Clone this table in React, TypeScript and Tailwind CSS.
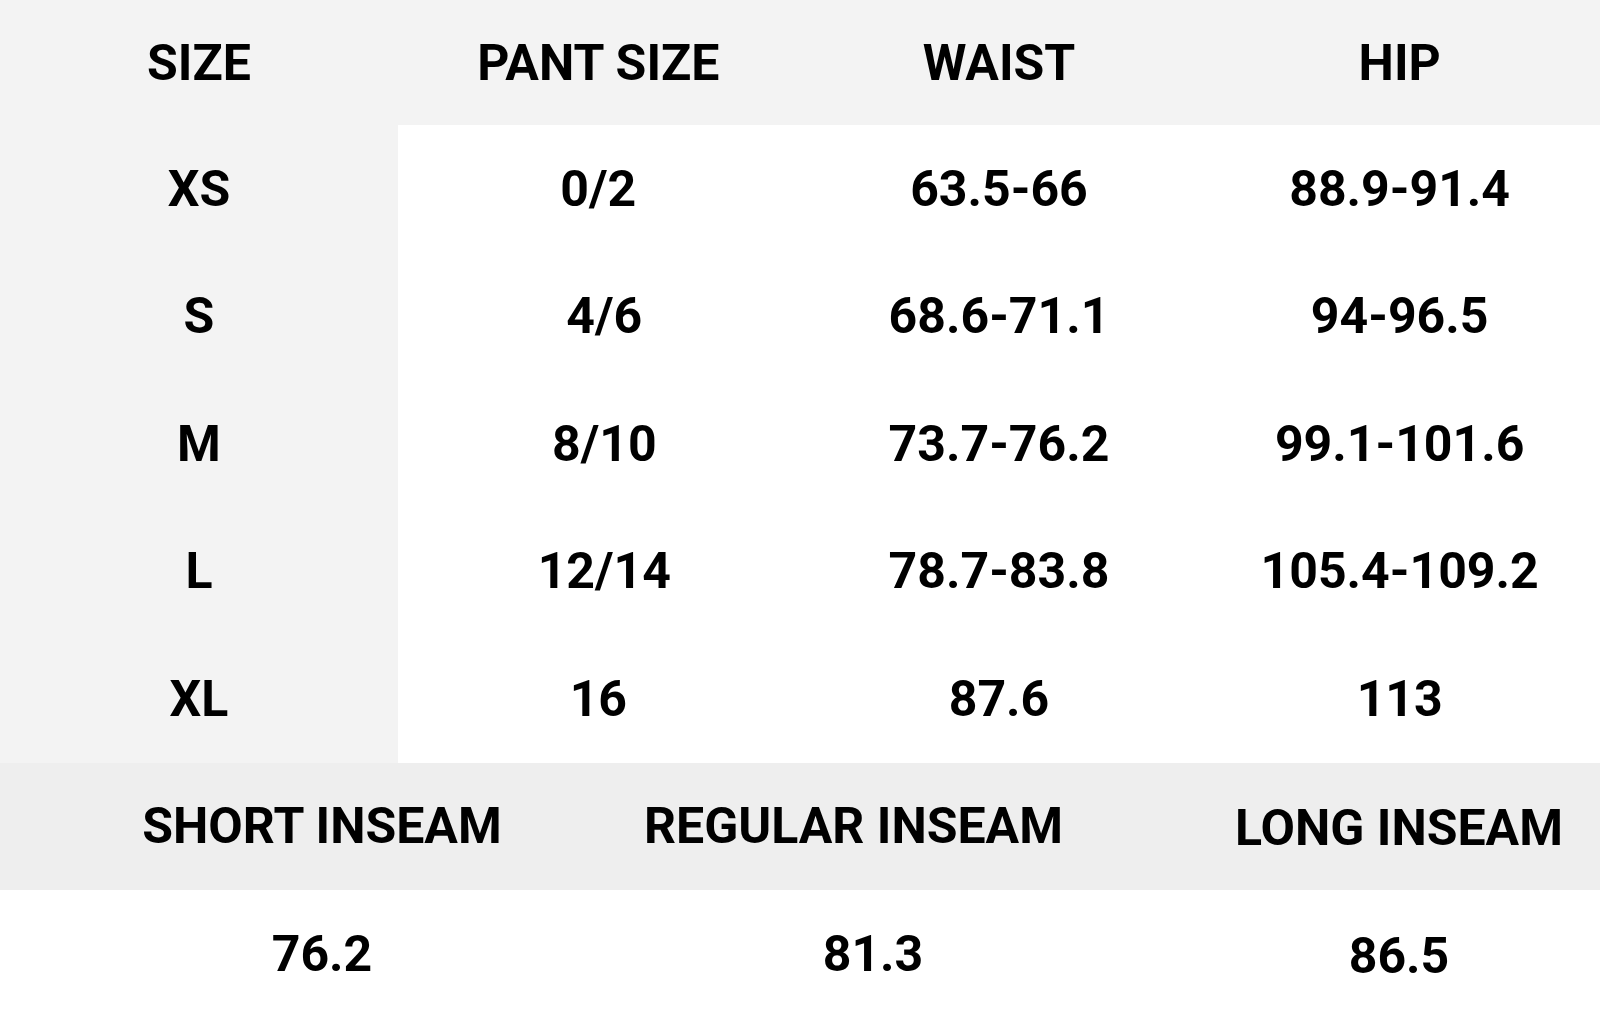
import React from "react";

const rows = [
  ["XS", "0/2", "63.5-66", "88.9-91.4", ""],
  ["S", "4/6", "68.6-71.1", "94-96.5", "pl-[12px]"],
  ["M", "8/10", "73.7-76.2", "99.1-101.6", "pl-[12px]"],
  ["L", "12/14", "78.7-83.8", "105.4-109.2", "pl-[12px]"],
  ["XL", "16", "87.6", "113", ""],
];

export default function App() {
  return (
    <main className="w-[1600px] h-[1018px] bg-white text-black font-['Roboto',sans-serif] font-bold text-[50px] leading-none whitespace-nowrap overflow-hidden">
      {/* Size table */}
      <section className="grid grid-cols-[398px_1fr_1fr_1fr] bg-[#f3f3f3] h-[125px] items-center text-center">
        <div>SIZE</div>
        <div>PANT SIZE</div>
        <div>WAIST</div>
        <div>HIP</div>
      </section>
      {rows.map((r) => (
        <div key={r[0]} className="grid grid-cols-[398px_1fr_1fr_1fr] h-[127.5px] items-center text-center">
          <div className="bg-[#f3f3f3] h-full flex items-center justify-center">{r[0]}</div>
          <div className={r[4]}>{r[1]}</div>
          <div>{r[2]}</div>
          <div>{r[3]}</div>
        </div>
      ))}

      {/* Inseam */}
      <section className="grid grid-cols-[644px_410px_1fr] bg-[#eeeeee] h-[127px] items-center text-center">
        <div>SHORT INSEAM</div>
        <div>REGULAR INSEAM</div>
        <div className="pl-[144px] pt-[4px]">LONG INSEAM</div>
      </section>
      <section className="grid grid-cols-[644px_410px_1fr] h-[128px] items-center text-center">
        <div>76.2</div>
        <div className="pl-[48px]">81.3</div>
        <div className="pl-[144px] pt-[4px]">86.5</div>
      </section>
    </main>
  );
}
